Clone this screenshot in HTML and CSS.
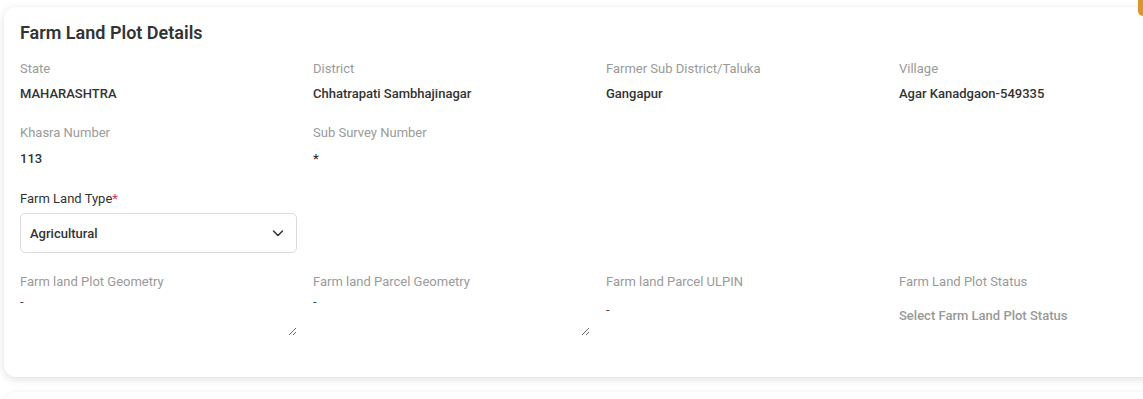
FILE: index.html
```html
<!DOCTYPE html>
<html lang="en">
<head>
<meta charset="utf-8">
<title>Farm Land Plot Details</title>
<link rel="stylesheet" href="styles.css">
</head>
<body>
<div class="page">
  <div class="fab"></div>
  <section class="card">
    <h2 class="card-title">Farm Land Plot Details</h2>
    <div class="grid row-first">
      <div class="field"><div class="label">State</div><div class="value">MAHARASHTRA</div></div>
      <div class="field"><div class="label">District</div><div class="value">Chhatrapati Sambhajinagar</div></div>
      <div class="field"><div class="label">Farmer Sub District/Taluka</div><div class="value">Gangapur</div></div>
      <div class="field"><div class="label">Village</div><div class="value">Agar Kanadgaon-549335</div></div>
    </div>
    <div class="grid row-second">
      <div class="field"><div class="label">Khasra Number</div><div class="value">113</div></div>
      <div class="field"><div class="label">Sub Survey Number</div><div class="value">*</div></div>
    </div>
    <div class="grid row-type">
      <div class="field">
        <div class="label label-dark">Farm Land Type<span class="req">*</span></div>
        <div class="select">
          <span class="select-text">Agricultural</span>
          <svg class="chev" width="14" height="14" viewBox="0 0 14 14"><path d="M2.5 5 L7 9.5 L11.5 5" fill="none" stroke="#333" stroke-width="1.5" stroke-linecap="round" stroke-linejoin="round"/></svg>
        </div>
      </div>
    </div>
    <div class="grid row-geo">
      <div class="field"><div class="label">Farm land Plot Geometry</div><textarea class="area" readonly>-</textarea></div>
      <div class="field"><div class="label">Farm land Parcel Geometry</div><textarea class="area" readonly>-</textarea></div>
      <div class="field"><div class="label">Farm land Parcel ULPIN</div><div class="input-value">-</div></div>
      <div class="field"><div class="label">Farm Land Plot Status</div><div class="status-value">Select Farm Land Plot Status</div></div>
    </div>
  </section>
  <section class="card card-next"></section>
</div>
</body>
</html>
```
FILE: styles.css
```css
html, body {
  margin: 0;
  padding: 0;
  background: #ffffff;
  overflow: hidden;
}
body {
  font-family: Roboto, "Liberation Sans", Arial, sans-serif;
  color: #222;
}
.page {
  position: relative;
  padding: 7px 0 0 4px;
  width: 1300px;
}
.fab {
  position: absolute;
  top: -10px;
  left: 1138px;
  width: 40px;
  height: 26px;
  background: #d9962a;
  border-radius: 5px;
}
.card {
  width: 1188px;
  box-sizing: border-box;
  background: #fff;
  border-radius: 12px;
  box-shadow: 0 2px 8px rgba(0, 0, 0, 0.13);
  padding: 15px 16px 40px;
}
.card-next {
  margin-top: 15px;
  height: 60px;
  padding: 0;
  box-shadow: 0 0 4px rgba(0, 0, 0, 0.08);
}
.card-title {
  margin: 0;
  font-size: 18px;
  line-height: 22px;
  font-weight: 600;
  color: #333;
}
.grid {
  display: grid;
  grid-template-columns: repeat(4, 277px);
  column-gap: 16px;
}
.row-first { margin-top: 16px; }
.row-second { margin-top: 21px; }
.row-type { margin-top: 22px; }
.row-geo { margin-top: 20px; }
.label {
  font-size: 13px;
  line-height: 18px;
  color: #9a9a9a;
}
.label-dark { color: #333; }
.req { color: #e0314b; }
.value {
  margin-top: 7px;
  font-size: 13px;
  line-height: 18px;
  font-weight: 500;
  color: #333;
}
.row-second .value { margin-top: 8px; }
.select {
  margin-top: 5px;
  height: 40px;
  box-sizing: border-box;
  border: 1px solid #dcdcdc;
  border-radius: 5px;
  display: flex;
  align-items: center;
  justify-content: space-between;
  padding: 0 11px 0 9px;
}
.select-text {
  font-size: 13px;
  font-weight: 500;
  color: #333;
}
.area {
  display: block;
  margin: 2px 0 0;
  width: 277px;
  height: 43px;
  box-sizing: border-box;
  border: none;
  padding: 0;
  font-family: inherit;
  font-size: 13px;
  line-height: 18px;
  color: #444;
  background: transparent;
  outline: none;
}
.input-value {
  margin-top: 2px;
  height: 32px;
  display: flex;
  align-items: center;
  font-size: 13px;
  color: #444;
}
.status-value {
  margin-top: 2px;
  height: 44px;
  display: flex;
  align-items: center;
  font-size: 13px;
  font-weight: 500;
  color: #999;
}
```
